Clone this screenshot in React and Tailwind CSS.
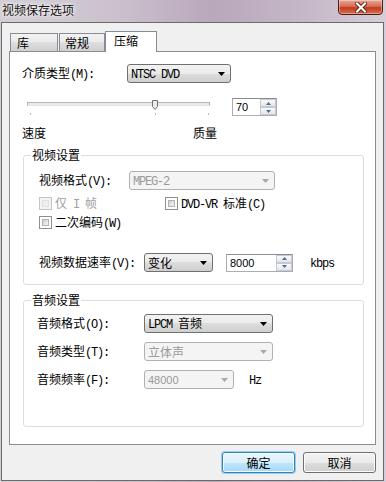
const CJK = /([\u2E80-\u9FFF\u3000-\u303F\uFF00-\uFFEF]+)/;

// 中文用黑体，半角字符用等宽（模拟宋体的半角宽度）
function T({ s }) {
  return s
    .split(CJK)
    .filter(Boolean)
    .map((part, i) =>
      CJK.test(part) ? (
        <span key={i}>{part}</span>
      ) : (
        <span
          key={i}
          className="font-['Liberation_Mono',monospace] tracking-[-1.2px] whitespace-pre"
        >
          {part}
        </span>
      )
    );
}

function Arrow({ disabled }) {
  return (
    <svg width="7" height="4" className="shrink-0">
      <path d="M0 0h7L3.5 4z" fill={disabled ? "#a8a8a8" : "#000"} />
    </svg>
  );
}

function Combo({ w, text, disabled, sans }) {
  return (
    <div
      className={`${w} h-[19px] flex items-center rounded-[3px] border pl-[3px] pr-[5px] ${
        disabled
          ? "border-[#adb2b5] bg-[#f4f4f4] text-[#9a9a9a]"
          : "border-[#707070] bg-[linear-gradient(#f2f2f2,#ebebeb_50%,#dddddd_50%,#cfcfcf)] text-black"
      }`}
    >
      <span className="flex-1 leading-[16px]">
        {sans ? (
          <span className="font-['Liberation_Sans',sans-serif] text-[11px]">{text}</span>
        ) : (
          <T s={text} />
        )}
      </span>
      <Arrow disabled={disabled} />
    </div>
  );
}

function SpinBtn({ up }) {
  return (
    <div className="flex-1 flex items-center justify-center border border-[#c4c9d2] bg-[linear-gradient(#fafafa,#e6e6e6)]">
      <svg width="5" height="3">
        <path d={up ? "M0 3h5L2.5 0z" : "M0 0h5L2.5 3z"} fill="#4c6b9e" />
      </svg>
    </div>
  );
}

function Spin({ w, value }) {
  return (
    <div className={`${w} h-[18px] flex border border-[#abadb3] border-t-[#8b8d92] bg-white`}>
      <div className="flex-1 flex items-center pl-[3px] font-['Liberation_Sans',sans-serif] text-[11px]">
        {value}
      </div>
      <div className="w-[16px] flex flex-col">
        <SpinBtn up />
        <SpinBtn />
      </div>
    </div>
  );
}

function Check({ disabled }) {
  return (
    <span
      className={`w-[13px] h-[13px] shrink-0 flex border p-[2px] ${
        disabled ? "border-[#c4c4c4] bg-[#f4f4f4]" : "border-[#8e8f8f] bg-white"
      }`}
    >
      <span
        className={`flex-1 border ${
          disabled
            ? "border-[#e0e0e0] bg-[#efefef]"
            : "border-[#aeb3b9] bg-[linear-gradient(135deg,#cbcfd5,#f6f6f6)]"
        }`}
      />
    </span>
  );
}

function Group({ title, h, children }) {
  return (
    <div className={`relative ml-[13px] w-[341px] ${h} rounded-[3px] border border-[#d5dfe5]`}>
      <span className="absolute -top-[9px] left-[7px] bg-white px-[1px] leading-[16px]">
        {title}
      </span>
      {children}
    </div>
  );
}

export default function App() {
  return (
    <div className="w-[386px] h-[482px] flex flex-col overflow-hidden bg-[linear-gradient(90deg,#d3ced5_0%,#cbc1cd_30%,#b9a7bc_55%,#c6b8c8_80%,#d6cdd8_100%)] font-['Noto_Sans_CJK_SC',sans-serif] text-[12px] leading-[16px] text-black">
      {/* 标题栏 */}
      <div className="h-[22px] flex justify-between shrink-0">
        <span className="pl-[2px] pt-[2px] text-[#111] [text-shadow:0_0_6px_#fff,0_0_3px_#fff]">
          视频保存选项
        </span>
        <div className="mr-[3px] w-[45px] h-[16px] -mt-[1px] flex items-center justify-center rounded-b-[4px] border border-[#4a1d14] bg-[linear-gradient(#e9a898,#d66d55_45%,#c23b1e_55%,#d8704a)] shadow-[inset_0_0_0_1px_rgba(255,255,255,0.35)]">
          <svg width="12" height="11" viewBox="0 0 12 11">
            <path d="M2 1.5l8 8M10 1.5l-8 8" stroke="#5a2a20" strokeWidth="4" strokeLinecap="square" />
            <path d="M2 1.5l8 8M10 1.5l-8 8" stroke="#fff" strokeWidth="2" strokeLinecap="square" />
          </svg>
        </div>
      </div>

      {/* 客户区 */}
      <div className="flex-1 ml-[1px] mr-[2px] mb-[1px] flex flex-col bg-[#f0f0f0] border border-[#6b6b6b]">
        {/* 选项卡 */}
        <div className="mt-[8px] ml-[8px] flex items-end">
          <div className="w-[48px] h-[18px] pl-[6px] flex items-center border border-b-0 border-[#898c95] bg-[linear-gradient(#f2f2f2,#ebebeb_50%,#dddddd_50%,#cfcfcf)]">
            库
          </div>
          <div className="ml-[1px] w-[46px] h-[18px] pl-[5px] flex items-center border border-b-0 border-[#898c95] bg-[linear-gradient(#f2f2f2,#ebebeb_50%,#dddddd_50%,#cfcfcf)]">
            常规
          </div>
          <div className="relative z-10 -mb-[1px] w-[52px] h-[21px] pl-[8px] pt-[1px] flex items-start border border-b-0 border-[#898c95] bg-white">
            压缩
          </div>
        </div>

        {/* 选项卡内容 */}
        <div className="ml-[7px] w-[367px] h-[394px] border border-[#898c95] bg-white">
          <div className="mt-[12px] pl-[12px] flex items-center">
            <span className="w-[105px]">
              <T s="介质类型(M):" />
            </span>
            <Combo w="w-[104px]" text="NTSC DVD" />
          </div>

          <div className="mt-[15px] pl-[17px] flex h-[18px]">
            <div className="relative w-[183px] h-[18px]">
              <div className="mt-[4px] h-[4px] border border-[#b5b5b5] border-b-[#e4e4e4] bg-[#e9ebeb]" />
              <svg width="7" height="10" className="absolute left-[125px] top-[2px]">
                <path d="M0.5 0.5h5v6l-2.5 3l-2.5-3z" fill="#ececec" stroke="#707070" />
              </svg>
              <span className="absolute left-[3px] top-[15px] w-[1px] h-[2px] bg-[#b8b8b8]" />
              <span className="absolute left-[128px] top-[15px] w-[1px] h-[2px] bg-[#b8b8b8]" />
              <span className="absolute left-[181px] top-[15px] w-[1px] h-[2px] bg-[#b8b8b8]" />
            </div>
            <div className="ml-[22px]">
              <Spin w="w-[45px]" value="70" />
            </div>
          </div>

          <div className="mt-[9px] pl-[12px] flex">
            <span className="w-[171px]">速度</span>
            <span>质量</span>
          </div>

          <div className="mt-[14px]">
            <Group title="视频设置" h="h-[130px]">
              <div className="mt-[15px] pl-[15px] flex items-center">
                <span className="w-[90px]">
                  <T s="视频格式(V):" />
                </span>
                <Combo w="w-[146px]" text="MPEG-2" disabled />
              </div>
              <div className="mt-[7px] pl-[15px] flex items-center h-[13px]">
                <div className="w-[126px] flex items-center text-[#a0a0a0]">
                  <Check disabled />
                  <span className="ml-[3px]">
                    <T s="仅 I 帧" />
                  </span>
                </div>
                <Check />
                <span className="ml-[3px]">
                  <T s="DVD-VR 标准(C)" />
                </span>
              </div>
              <div className="mt-[6px] pl-[15px] flex items-center h-[13px]">
                <Check />
                <span className="ml-[3px]">
                  <T s="二次编码(W)" />
                </span>
              </div>
              <div className="mt-[24px] pl-[15px] flex items-center">
                <span className="w-[105px]">
                  <T s="视频数据速率(V):" />
                </span>
                <Combo w="w-[69px]" text="变化" />
                <div className="ml-[13px]">
                  <Spin w="w-[67px]" value="8000" />
                </div>
                <span className="ml-[17px]">
                  <T s="kbps" />
                </span>
              </div>
            </Group>
          </div>

          <div className="mt-[15px]">
            <Group title="音频设置" h="h-[127px]">
              <div className="mt-[13px] pl-[13px] flex items-center">
                <span className="w-[107px]">
                  <T s="音频格式(O):" />
                </span>
                <Combo w="w-[129px]" text="LPCM 音频" />
              </div>
              <div className="mt-[9px] pl-[13px] flex items-center">
                <span className="w-[107px]">
                  <T s="音频类型(T):" />
                </span>
                <Combo w="w-[129px]" text="立体声" disabled />
              </div>
              <div className="mt-[9px] pl-[13px] flex items-center">
                <span className="w-[107px]">
                  <T s="音频频率(F):" />
                </span>
                <Combo w="w-[90px]" text="48000" disabled sans />
                <span className="ml-[15px]">
                  <T s="Hz" />
                </span>
              </div>
            </Group>
          </div>
        </div>

        {/* 按钮 */}
        <div className="mt-[7px] pr-[7px] flex justify-end gap-[8px]">
          <button className="w-[73px] h-[21px] rounded-[3px] border border-[#3c7fb1] bg-[linear-gradient(#eaf6fd,#d9f0fc_50%,#bee6fd_50%,#a7d9f5)] shadow-[0_0_0_1px_#8fd0f5,inset_0_0_0_1px_#f4fbff] leading-[16px]">
            确定
          </button>
          <button className="w-[73px] h-[21px] rounded-[3px] border border-[#707070] bg-[linear-gradient(#f2f2f2,#ebebeb_50%,#dddddd_50%,#cfcfcf)] shadow-[inset_0_0_0_1px_#fcfcfc] leading-[16px]">
            取消
          </button>
        </div>
      </div>
    </div>
  );
}
